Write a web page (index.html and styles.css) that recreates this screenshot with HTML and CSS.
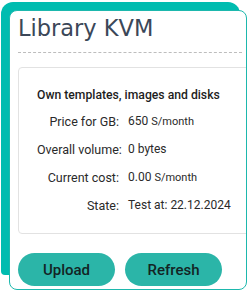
FILE: index.html
```html
<!DOCTYPE html>
<html lang="en">
<head>
  <meta charset="UTF-8">
  <title>Library KVM</title>
  <link rel="stylesheet" href="styles.css">
</head>
<body>
  <div class="marco">
    <div class="tarjeta">
      <h1 class="titulo">Library KVM</h1>
      <div class="caja">
        <div class="encabezado">Own templates, images and disks</div>
        <div class="fila">
          <span class="etiqueta">Price for GB:</span>
          <span class="valor">650 <span class="unidad">S/month</span></span>
        </div>
        <div class="fila">
          <span class="etiqueta">Overall volume:</span>
          <span class="valor">0 bytes</span>
        </div>
        <div class="fila">
          <span class="etiqueta">Current cost:</span>
          <span class="valor">0.00 <span class="unidad">S/month</span></span>
        </div>
        <div class="fila">
          <span class="etiqueta">State:</span>
          <span class="valor">Test at: 22.12.2024</span>
        </div>
      </div>
      <div class="botones">
        <button>Upload</button>
        <button>Refresh</button>
      </div>
    </div>
  </div>
</body>
</html>
```

FILE: styles.css
```css
body {
  margin: 0;
  background: #ffffff;
  font-family: 'Roboto', 'Noto Sans', sans-serif;
  overflow: hidden;
}

.marco {
  position: relative;
  padding: 10px 0 0 9px;
}

/* bloque verde detras de la tarjeta */
.marco::before {
  content: "";
  position: absolute;
  top: 2px;
  left: 1px;
  width: 239px;
  height: 273px;
  background: #00bcb0;
  border-radius: 12px 12px 4px 4px;
  z-index: -1;
}

.tarjeta {
  width: 228px;
  height: 278px;
  border: 1px solid #1db8ad;
  border-radius: 8px;
  background: #ffffff;
  padding: 0 0 0 8px;
  overflow: hidden;
}

.titulo {
  margin: 0;
  font-family: 'DejaVu Sans', Verdana, sans-serif;
  font-weight: normal;
  font-size: 22.5px;
  line-height: 30px;
  color: #3b4758;
  padding-top: 2px;
  padding-bottom: 9px;
  border-bottom: 1px dashed #bdbdbd;
  margin-right: 4px;
}

.caja {
  margin-top: 14px;
  width: 260px;
  height: 167px;
  border: 1px solid #e2e2e2;
  border-radius: 4px;
  padding: 20px 0 0 18px;
  box-sizing: border-box;
}

.encabezado {
  font-size: 12.2px;
  font-weight: 500;
  color: #1d1d1d;
  margin-bottom: 5px;
}

.fila {
  display: flex;
  align-items: center;
  height: 28px;
  font-size: 12px;
  color: #2a2a2a;
  white-space: nowrap;
}

.etiqueta {
  width: 82px;
  text-align: right;
  margin-right: 9px;
  font-size: 12.5px;
}

.unidad {
  font-size: 11px;
}

.botones {
  display: flex;
  gap: 10px;
  margin-top: 19px;
}

button {
  width: 97px;
  height: 33px;
  border: none;
  border-radius: 17px;
  background-color: #2bb5a8;
  color: #132424;
  font-family: 'Roboto', 'Noto Sans', sans-serif;
  font-size: 15px;
  font-weight: 500;
  cursor: pointer;
}
```
